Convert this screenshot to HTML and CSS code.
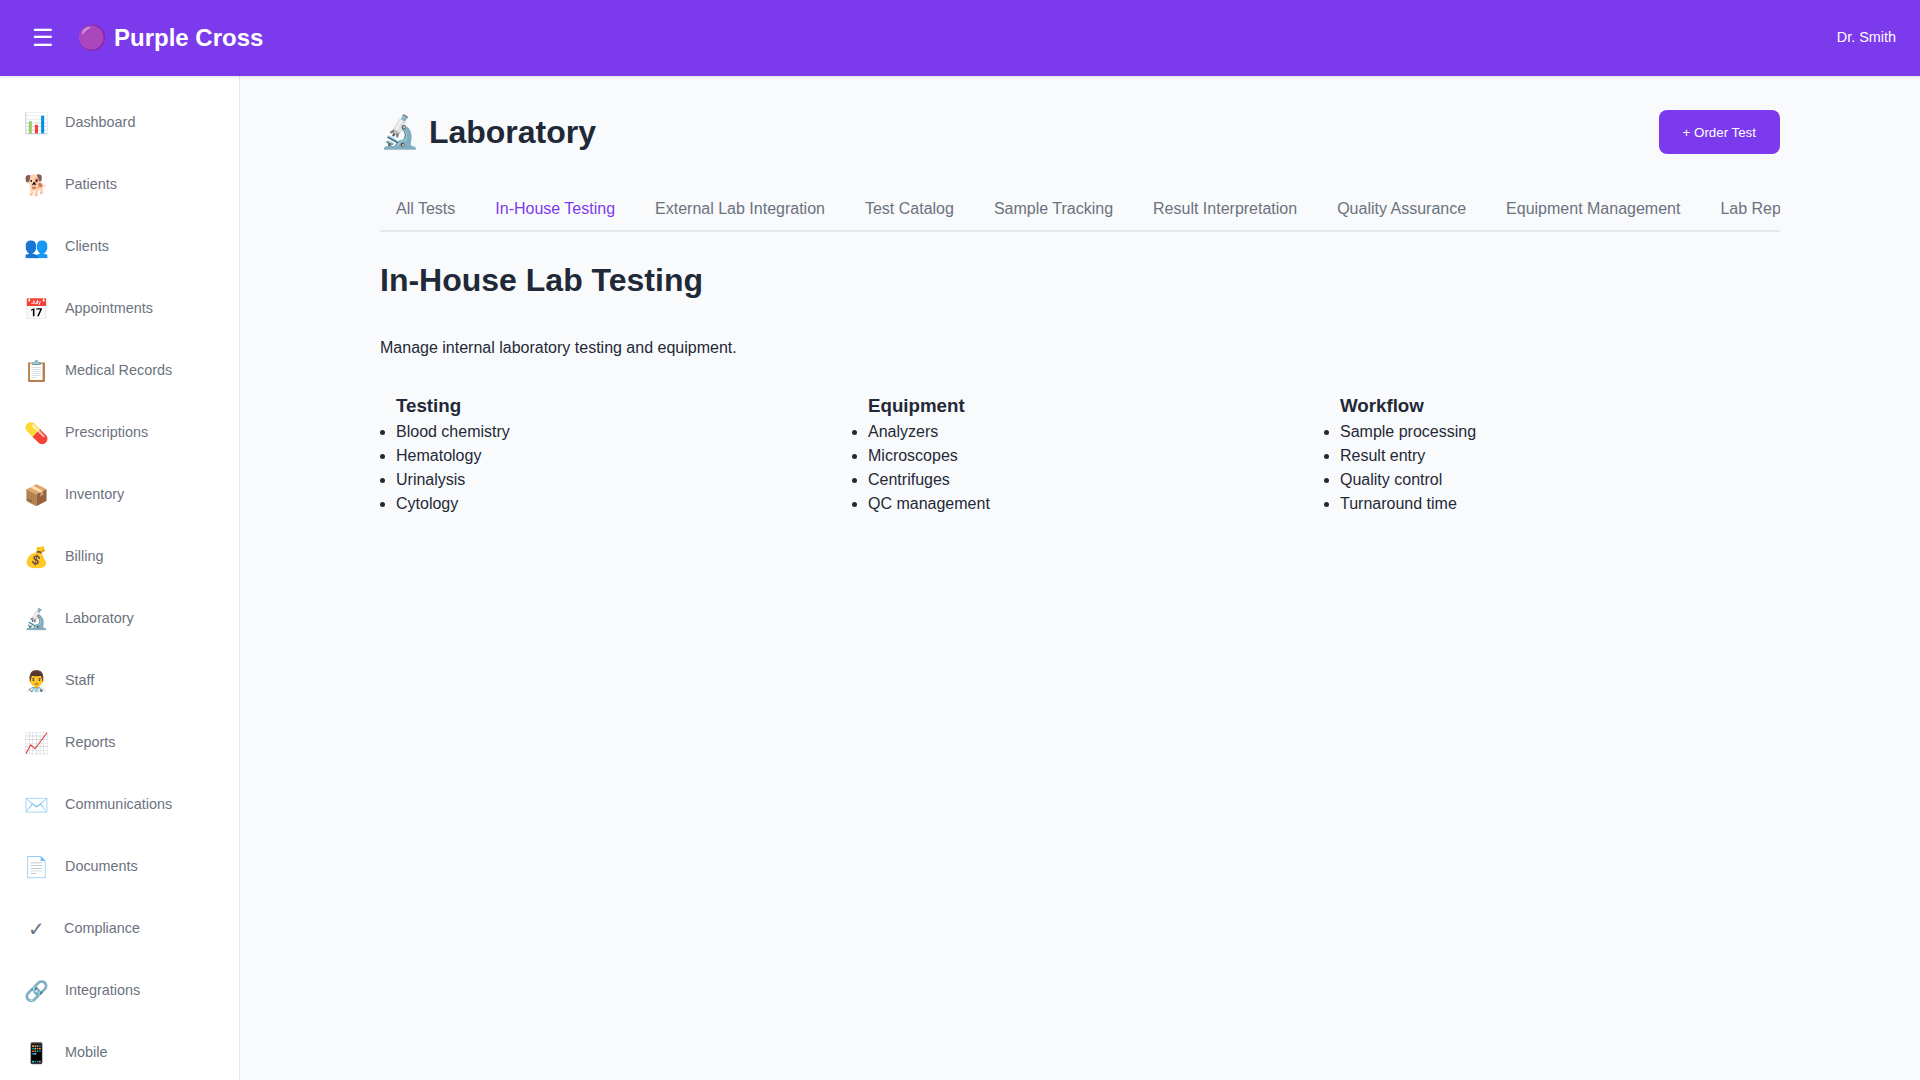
FILE: index.html
```html
<!DOCTYPE html>
<html lang="en">
<head>
<meta charset="utf-8">
<title>Purple Cross</title>
<link rel="stylesheet" href="styles.css">
</head>
<body>
<div class="app">
<header class="topbar">
<div class="topbar-left">
<button class="menu-toggle">☰</button>
<h1 class="brand">🟣 Purple Cross</h1>
</div>
<div class="user">Dr. Smith</div>
</header>
<div class="body">
<nav class="sidebar">
<a class="nav-item"><span class="nav-icon">📊</span><span class="nav-label">Dashboard</span></a>
<a class="nav-item"><span class="nav-icon">🐕</span><span class="nav-label">Patients</span></a>
<a class="nav-item"><span class="nav-icon">👥</span><span class="nav-label">Clients</span></a>
<a class="nav-item"><span class="nav-icon">📅</span><span class="nav-label">Appointments</span></a>
<a class="nav-item"><span class="nav-icon">📋</span><span class="nav-label">Medical Records</span></a>
<a class="nav-item"><span class="nav-icon">💊</span><span class="nav-label">Prescriptions</span></a>
<a class="nav-item"><span class="nav-icon">📦</span><span class="nav-label">Inventory</span></a>
<a class="nav-item"><span class="nav-icon">💰</span><span class="nav-label">Billing</span></a>
<a class="nav-item"><span class="nav-icon">🔬</span><span class="nav-label">Laboratory</span></a>
<a class="nav-item"><span class="nav-icon">👨‍⚕️</span><span class="nav-label">Staff</span></a>
<a class="nav-item"><span class="nav-icon">📈</span><span class="nav-label">Reports</span></a>
<a class="nav-item"><span class="nav-icon">✉️</span><span class="nav-label">Communications</span></a>
<a class="nav-item"><span class="nav-icon">📄</span><span class="nav-label">Documents</span></a>
<a class="nav-item"><span class="nav-icon">✓</span><span class="nav-label">Compliance</span></a>
<a class="nav-item"><span class="nav-icon">🔗</span><span class="nav-label">Integrations</span></a>
<a class="nav-item"><span class="nav-icon">📱</span><span class="nav-label">Mobile</span></a>
</nav>
<main class="main">
<div class="page">
<div class="page-header">
<h1 class="page-title">🔬 Laboratory</h1>
<button class="primary">+ Order Test</button>
</div>
<div class="tabs">
<button class="tab">All Tests</button>
<button class="tab active">In-House Testing</button>
<button class="tab">External Lab Integration</button>
<button class="tab">Test Catalog</button>
<button class="tab">Sample Tracking</button>
<button class="tab">Result Interpretation</button>
<button class="tab">Quality Assurance</button>
<button class="tab">Equipment Management</button>
<button class="tab">Lab Reporting</button>
</div>
<h2 class="section-title">In-House Lab Testing</h2>
<p class="intro">Manage internal laboratory testing and equipment.</p>
<div class="features">
<section class="feature"><h3>Testing</h3><ul><li>Blood chemistry</li><li>Hematology</li><li>Urinalysis</li><li>Cytology</li></ul></section>
<section class="feature"><h3>Equipment</h3><ul><li>Analyzers</li><li>Microscopes</li><li>Centrifuges</li><li>QC management</li></ul></section>
<section class="feature"><h3>Workflow</h3><ul><li>Sample processing</li><li>Result entry</li><li>Quality control</li><li>Turnaround time</li></ul></section>
</div>
</div>
</main>
</div>
</div>
</body>
</html>
```
FILE: styles.css
```css
* { box-sizing: border-box; margin: 0; padding: 0; }
body { font-family: "Liberation Sans", Arial, sans-serif; font-size: 16px; line-height: 1.5; color: #1f2937; background: #f9fafb; }
.app { display: flex; flex-direction: column; height: 100vh; overflow: hidden; }
.topbar { display: flex; flex: none; align-items: center; justify-content: space-between; height: 76px; padding: 0 24px; background: #7c3aed; color: #fff; box-shadow: 0 1px 3px rgba(0, 0, 0, 0.12); z-index: 1; }
.topbar-left { display: flex; align-items: center; gap: 15.3px; }
.menu-toggle { padding: 8px; border: 0; background: none; color: #fff; font: 24px/28px "Liberation Sans", Arial, sans-serif; }
.brand { font-size: 24px; font-weight: 700; }
.user { font-size: 14.4px; }
.body { display: flex; flex: 1; min-height: 0; }
.sidebar { flex: none; width: 240px; padding: 16px 0; background: #fff; border-right: 1px solid #e5e7eb; overflow: hidden; }
.nav-item { display: flex; align-items: center; gap: 16px; height: 62px; padding: 0 24px; color: #6b7280; }
.nav-icon { min-width: 24px; text-align: center; font-size: 20px; }
.nav-label { font-size: 14.4px; }
.main { flex: 1; min-width: 0; padding: 32px; }
.page { max-width: 1400px; margin: 0 auto; }
.page-header { display: flex; align-items: center; justify-content: space-between; margin-bottom: 32px; }
.page-title { font-size: 32px; }
.primary { height: 44px; padding: 0 24px; border: 0; border-radius: 8px; background: #7c3aed; color: #fff; font: 13.33px "Liberation Sans", Arial, sans-serif; }
.tabs { display: flex; overflow: hidden; margin-bottom: 24px; border-bottom: 2px solid #e5e7eb; }
.tab { flex: none; padding: 12px 16px; margin-right: 8px; border: 0; background: none; color: #6b7280; font: 16px "Liberation Sans", Arial, sans-serif; }
.tab.active { color: #7c3aed; }
.section-title { margin-bottom: 32px; font-size: 32px; }
.intro { margin-bottom: 32px; }
.features { display: grid; grid-template-columns: repeat(3, 1fr); gap: 16px; }
.feature { padding-left: 16px; }
.feature h3 { font-size: 18.72px; }
```
